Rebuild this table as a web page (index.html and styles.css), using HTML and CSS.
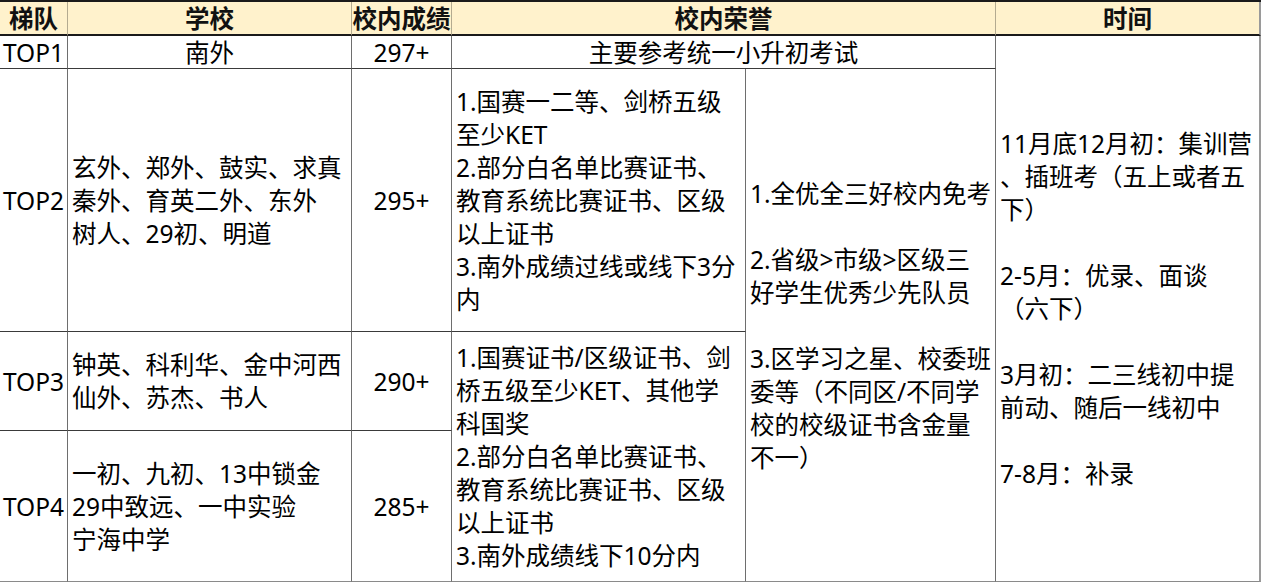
FILE: index.html
```html
<!DOCTYPE html>
<html lang="zh-CN">
<head>
<meta charset="utf-8">
<title>梯队</title>
<link rel="stylesheet" href="styles.css">
</head>
<body>
<div class="sheet">
  <div class="cell head c-tier"><div>梯队</div></div>
  <div class="cell head c-school"><div>学校</div></div>
  <div class="cell head c-score"><div>校内成绩</div></div>
  <div class="cell head c-honor-all"><div>校内荣誉</div></div>
  <div class="cell head c-time"><div>时间</div></div>

  <div class="cell center c-tier r-top1"><div>TOP1</div></div>
  <div class="cell center c-school r-top1"><div>南外</div></div>
  <div class="cell center c-score r-top1"><div>297+</div></div>
  <div class="cell center c-honor-all r-top1"><div>主要参考统一小升初考试</div></div>
  <div class="cell left c-time r-time"><div>11月底12月初：集训营<br>、插班考（五上或者五<br>下）<br><br>2-5月：优录、面谈<br>（六下）<br><br>3月初：二三线初中提<br>前动、随后一线初中<br><br>7-8月：补录</div></div>

  <div class="cell center c-tier r-top2"><div>TOP2</div></div>
  <div class="cell left c-school r-top2"><div>玄外、郑外、鼓实、求真<br>秦外、育英二外、东外<br>树人、29初、明道</div></div>
  <div class="cell center c-score r-top2"><div>295+</div></div>
  <div class="cell left c-honor-a r-top2"><div>1.国赛一二等、剑桥五级<br>至少KET<br>2.部分白名单比赛证书、<br>教育系统比赛证书、区级<br>以上证书<br>3.南外成绩过线或线下3分<br>内</div></div>
  <div class="cell left c-honor-b r-honor-b"><div>1.全优全三好校内免考<br><br>2.省级&gt;市级&gt;区级三<br>好学生优秀少先队员<br><br>3.区学习之星、校委班<br>委等（不同区/不同学<br>校的校级证书含金量<br>不一）</div></div>

  <div class="cell center c-tier r-top3"><div>TOP3</div></div>
  <div class="cell left c-school r-top3"><div>钟英、科利华、金中河西<br>仙外、苏杰、书人</div></div>
  <div class="cell center c-score r-top3"><div>290+</div></div>
  <div class="cell left c-honor-a r-honor-a2"><div>1.国赛证书/区级证书、剑<br>桥五级至少KET、其他学<br>科国奖<br>2.部分白名单比赛证书、<br>教育系统比赛证书、区级<br>以上证书<br>3.南外成绩线下10分内</div></div>

  <div class="cell center c-tier r-top4"><div>TOP4</div></div>
  <div class="cell left c-school r-top4"><div>一初、九初、13中锁金<br>29中致远、一中实验<br>宁海中学</div></div>
  <div class="cell center c-score r-top4"><div>285+</div></div>
</div>
</body>
</html>
```

FILE: styles.css
```css
html, body {
  margin: 0;
  padding: 0;
  background: #ffffff;
}

.sheet {
  display: grid;
  grid-template-columns: 68px 284px 100px 294px 250px 265px;
  grid-template-rows: 34px 33px 263px 99px 151px;
  border-top: 2px solid #1a1a1a;
  width: 1261px;
  font-family: "Noto Sans", "Noto Sans CJK SC", sans-serif;
  font-size: 24.5px;
  line-height: 33px;
  color: #000000;
}

.cell {
  box-sizing: border-box;
  display: flex;
  align-items: center;
  border-right: 1px solid #6e6e6e;
  border-bottom: 1px solid #3a3a3a;
  white-space: nowrap;
  min-width: 0;
}

.center {
  justify-content: center;
  text-align: center;
}

.left {
  justify-content: flex-start;
  text-align: left;
  padding-left: 4px;
}

.head {
  background: #fff2cc;
  font-weight: 700;
  justify-content: center;
  text-align: center;
  border-right: 1px solid #b4ab90;
  border-bottom: 2px solid #1a1a1a;
  color: #111111;
}

.c-tier { grid-column: 1; }
.c-school { grid-column: 2; }
.c-score { grid-column: 3; }
.c-honor-all { grid-column: 4 / span 2; }
.c-honor-a { grid-column: 4; }
.c-honor-b { grid-column: 5; }
.c-time { grid-column: 6; border-right: 2px solid #9a9a9a; }

.head { grid-row: 1; }
.r-top1 { grid-row: 2; }
.r-top2 { grid-row: 3; }
.r-top3 { grid-row: 4; }
.r-top4 { grid-row: 5; border-bottom-color: #8a8a8a; }
.r-time { grid-row: 2 / span 4; border-bottom-color: #8a8a8a; }
.r-honor-b { grid-row: 3 / span 3; border-bottom-color: #8a8a8a; }
.r-honor-a2 { grid-row: 4 / span 2; border-bottom-color: #8a8a8a; }
```
